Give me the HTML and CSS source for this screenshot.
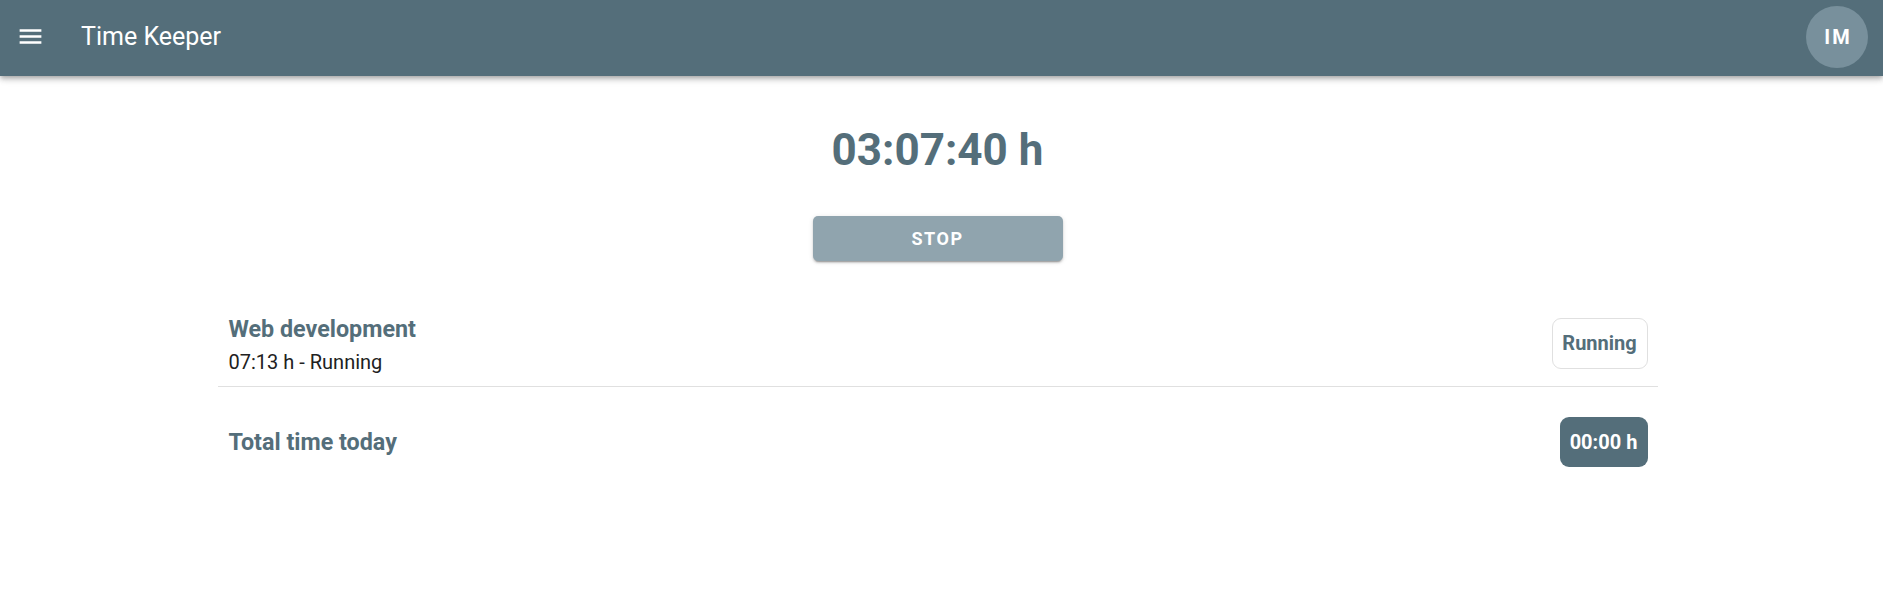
FILE: index.html
```html
<!DOCTYPE html>
<html>
<head>
<meta charset="utf-8">
<link rel="stylesheet" href="styles.css">
</head>
<body>
<header class="toolbar">
  <button class="menu-btn" aria-label="menu">
    <svg viewBox="0 0 24 24" width="29" height="29"><path fill="#fff" d="M3 18h18v-2H3v2zm0-5h18v-2H3v2zm0-7v2h18V6H3z"/></svg>
  </button>
  <span class="title">Time Keeper</span>
  <span class="spacer"></span>
  <div class="avatar">IM</div>
</header>
<main class="main">
  <div class="timer">03:07:40 h</div>
  <button class="stop">STOP</button>
  <div class="list">
    <div class="row row-task">
      <div class="texts">
        <div class="task-title">Web development</div>
        <div class="task-sub">07:13 h - Running</div>
      </div>
      <span class="chip chip-outline">Running</span>
    </div>
    <div class="row row-total">
      <div class="total-label">Total time today</div>
      <span class="chip chip-filled">00:00 h</span>
    </div>
  </div>
</main>
</body>
</html>
```

FILE: styles.css
```css
html, body {
  margin: 0;
  padding: 0;
  background: #fff;
}
body {
  font-family: Roboto, "Liberation Sans", sans-serif;
}
.toolbar {
  height: 76px;
  background: #546e7a;
  display: flex;
  align-items: center;
  padding: 0 15px 0 16px;
  box-shadow: 0 2px 4px -1px rgba(0,0,0,.2), 0 4px 5px 0 rgba(0,0,0,.14), 0 1px 10px 0 rgba(0,0,0,.12);
  position: relative;
  z-index: 1;
}
.menu-btn {
  background: none;
  border: 0;
  padding: 0;
  width: 29px;
  height: 29px;
  display: flex;
  margin-top: -4px;
  cursor: pointer;
}
.title {
  font-family: Roboto, "Liberation Sans", sans-serif;
  color: #fff;
  font-size: 25px;
  margin-left: 36px;
  margin-top: -3px;
}
.spacer { flex: 1; }
.avatar {
  width: 62px;
  height: 62px;
  border-radius: 50%;
  background: #78909c;
  color: #fff;
  font-family: Roboto, "Liberation Sans", sans-serif;
  font-weight: 700;
  font-size: 20px;
  letter-spacing: 2px;
  text-indent: 2px;
  display: flex;
  align-items: center;
  justify-content: center;
  margin-top: -2px;
}
.main {
  width: 1875px;
  display: flex;
  flex-direction: column;
  align-items: center;
}
.timer {
  margin-top: 48px;
  font-size: 44px;
  line-height: 52px;
  font-weight: 700;
  color: #546e7a;
}
.stop {
  margin-top: 40px;
  width: 250px;
  height: 45px;
  border: 0;
  border-radius: 5px;
  background: #90a4ae;
  color: #fff;
  font-family: Roboto, "Liberation Sans", sans-serif;
  font-weight: 700;
  font-size: 18px;
  letter-spacing: 1.5px;
  box-shadow: 0 3px 1px -2px rgba(0,0,0,.2), 0 2px 2px 0 rgba(0,0,0,.14), 0 1px 5px 0 rgba(0,0,0,.12);
}
.list {
  width: 1440px;
  margin-top: 39px;
}
.row {
  display: flex;
  align-items: center;
  justify-content: space-between;
  padding: 0 10px 0 11px;
}
.row-task {
  height: 86px;
  border-bottom: 1px solid #e0e0e0;
}
.row-total {
  height: 110px;
}
.task-title {
  font-size: 23.3px;
  line-height: 36px;
  font-weight: 700;
  color: #546e7a;
}
.task-sub {
  font-size: 20px;
  line-height: 28px;
  margin-top: 1px;
  color: #212121;
}
.total-label {
  font-size: 23.3px;
  font-weight: 700;
  color: #546e7a;
}
.chip {
  display: flex;
  align-items: center;
  justify-content: center;
  box-sizing: border-box;
  border-radius: 9px;
  font-weight: 700;
  font-size: 20px;
}
.chip-outline {
  width: 96px;
  height: 51px;
  border: 1px solid #e0e0e0;
  color: #546e7a;
}
.chip-filled {
  width: 88px;
  height: 50px;
  background: #546e7a;
  color: #fff;
}
```
